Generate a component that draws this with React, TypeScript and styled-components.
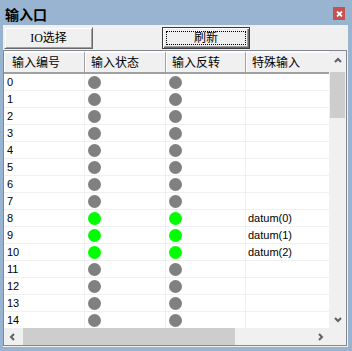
import React from 'react'
import styled, { createGlobalStyle } from 'styled-components'

const GlobalStyle = createGlobalStyle`
  html, body {
    margin: 0;
    padding: 0;
    background: #99b4d1;
  }
  * {
    box-sizing: border-box;
  }
`

const CJK = `"Noto Sans CJK SC", "Liberation Sans", sans-serif`
const LATIN = `"Liberation Sans", "Noto Sans CJK SC", sans-serif`

const COLS = '81px 81px 80px 100px'
const GRAY = '#808080'
const GREEN = '#00ff00'

const Window = styled.div`
  width: 352px;
  height: 351px;
  background: #99b4d1;
  padding: 0 4px 4px 3px;
  display: flex;
  flex-direction: column;
`

const TitleBar = styled.div`
  height: 25px;
  display: flex;
  align-items: center;
  justify-content: space-between;
  padding: 2px 3px 0 2px;
`

const Title = styled.span`
  font-family: ${CJK};
  font-weight: 700;
  font-size: 14px;
  line-height: 16px;
  color: #000;
`

const CloseBox = styled.div`
  width: 12px;
  height: 13px;
  background: #c75050;
  display: flex;
  align-items: center;
  justify-content: center;
`

const Body = styled.div`
  flex: 1;
  background: #f0f0f0;
  display: flex;
  flex-direction: column;
  min-height: 0;
`

const Toolbar = styled.div`
  height: 25px;
  display: flex;
  align-items: flex-start;
  padding: 2px 0 0 1px;
`

const Button = styled.div<{ $w: number; $ml?: number; $default?: boolean }>`
  position: relative;
  width: ${p => p.$w}px;
  height: 22px;
  margin-left: ${p => p.$ml ?? 0}px;
  background: #f0f0f0;
  border: 1px solid ${p => (p.$default ? '#3c3c3c' : '#f0f0f0')};
  border-right-color: ${p => (p.$default ? '#3c3c3c' : '#696969')};
  border-bottom-color: ${p => (p.$default ? '#3c3c3c' : '#696969')};
  box-shadow: ${p =>
    p.$default
      ? 'inset 1px 1px #ffffff, inset -1px -1px #696969, inset -2px -2px #a0a0a0'
      : 'inset 1px 1px #ffffff, inset -1px -1px #a0a0a0'};
  display: flex;
  align-items: center;
  justify-content: center;
  font-family: "Liberation Serif", "Noto Sans CJK SC", serif;
  font-size: 12px;
  line-height: 14px;
  color: #000;
`

const FocusRing = styled.div`
  position: absolute;
  inset: 3px;
  border: 1px dotted #000;
  pointer-events: none;
`

const ListView = styled.div`
  flex: 1;
  margin: 0 1px 1px 0;
  border: 1px solid #828790;
  background: #ffffff;
  display: grid;
  grid-template-columns: 1fr 17px;
  grid-template-rows: 1fr 17px;
  min-height: 0;
`

const Viewport = styled.div`
  overflow: hidden;
  display: flex;
  flex-direction: column;
  min-width: 0;
  min-height: 0;
`

const HeaderRow = styled.div`
  display: grid;
  grid-template-columns: ${COLS};
  width: max-content;
  height: 23px;
  flex-shrink: 0;
`

const HeaderCell = styled.div<{ $pl?: number }>`
  height: 23px;
  background: #f0f0f0;
  border-top: 2px solid #ffffff;
  border-right: 1px solid #a0a0a0;
  border-bottom: 2px solid #a0a0a0;
  box-shadow: inset 1px 0 #ffffff;
  padding-left: ${p => p.$pl ?? 6}px;
  font-family: ${CJK};
  font-size: 12px;
  line-height: 18px;
  color: #000;
  white-space: nowrap;
`

const DataRow = styled.div`
  display: grid;
  grid-template-columns: ${COLS};
  width: max-content;
  height: 17px;
  flex-shrink: 0;
`

const Cell = styled.div<{ $pl?: number }>`
  height: 17px;
  border-right: 1px solid #f0f0f0;
  border-bottom: 1px solid #f0f0f0;
  padding-left: ${p => p.$pl ?? 2}px;
  display: flex;
  align-items: center;
  font-family: ${LATIN};
  font-size: 11px;
  color: #000;
  white-space: nowrap;
`

const Dot = styled.span<{ $on: boolean }>`
  width: 13px;
  height: 13px;
  border-radius: 50%;
  background: ${p => (p.$on ? GREEN : GRAY)};
  margin-left: 1px;
`

const VScroll = styled.div`
  background: #f0f0f0;
  display: flex;
  flex-direction: column;
`

const HScroll = styled.div`
  background: #f0f0f0;
  display: flex;
  align-items: stretch;
`

const Corner = styled.div`
  background: #f0f0f0;
`

const ArrowBox = styled.div<{ $h?: number }>`
  width: 17px;
  height: ${p => p.$h ?? 17}px;
  flex-shrink: 0;
  display: flex;
  align-items: center;
  justify-content: center;
`

const VThumb = styled.div`
  height: 46px;
  margin: 1px 1px 0;
  background: #cdcdcd;
`

const HThumb = styled.div`
  width: 212px;
  margin: 0 0 0 2px;
  background: #cdcdcd;
`

const Spacer = styled.div`
  flex: 1;
`

type Dir = 'up' | 'down' | 'left' | 'right'

const Chevron = ({ dir }: { dir: Dir }) => {
  const pts: Record<Dir, string> = {
    up: '1,5 4,2 7,5',
    down: '1,2 4,5 7,2',
    left: '5,1 2,4 5,7',
    right: '2,1 5,4 2,7',
  }
  return (
    <svg width="8" height="8" viewBox="0 0 8 8">
      <polyline points={pts[dir]} fill="none" stroke="#606060" strokeWidth="2" />
    </svg>
  )
}

type Row = { id: number; on: boolean; special: string }

// only the rows that fit in the visible part of the list
const rows: Row[] = Array.from({ length: 15 }, (_, i) => ({
  id: i,
  on: i >= 8 && i <= 10,
  special: i >= 8 && i <= 10 ? `datum(${i - 8})` : '',
}))

export default function App() {
  return (
    <>
      <GlobalStyle />
      <Window>
        <TitleBar>
          <Title>输入口</Title>
          <CloseBox>
            <svg width="7" height="6" viewBox="0 0 7 6">
              <path d="M1 0.5 L6 5.5 M6 0.5 L1 5.5" stroke="#fff" strokeWidth="1.8" />
            </svg>
          </CloseBox>
        </TitleBar>
        <Body>
          <Toolbar>
            <Button $w={89}>IO选择</Button>
            <Button $w={88} $ml={69} $default>
              <FocusRing />
              刷新
            </Button>
          </Toolbar>
          <ListView>
            <Viewport>
              <HeaderRow>
                <HeaderCell $pl={8}>输入编号</HeaderCell>
                <HeaderCell>输入状态</HeaderCell>
                <HeaderCell>输入反转</HeaderCell>
                <HeaderCell>特殊输入</HeaderCell>
              </HeaderRow>
              {rows.map(r => (
                <DataRow key={r.id}>
                  <Cell $pl={3}>{r.id}</Cell>
                  <Cell>
                    <Dot $on={r.on} />
                  </Cell>
                  <Cell>
                    <Dot $on={r.on} />
                  </Cell>
                  <Cell>{r.special}</Cell>
                </DataRow>
              ))}
            </Viewport>
            <VScroll>
              <ArrowBox $h={20}>
                <Chevron dir="up" />
              </ArrowBox>
              <VThumb />
              <Spacer />
              <ArrowBox>
                <Chevron dir="down" />
              </ArrowBox>
            </VScroll>
            <HScroll>
              <ArrowBox>
                <Chevron dir="left" />
              </ArrowBox>
              <HThumb />
              <Spacer />
              <ArrowBox>
                <Chevron dir="right" />
              </ArrowBox>
            </HScroll>
            <Corner />
          </ListView>
        </Body>
      </Window>
    </>
  )
}
